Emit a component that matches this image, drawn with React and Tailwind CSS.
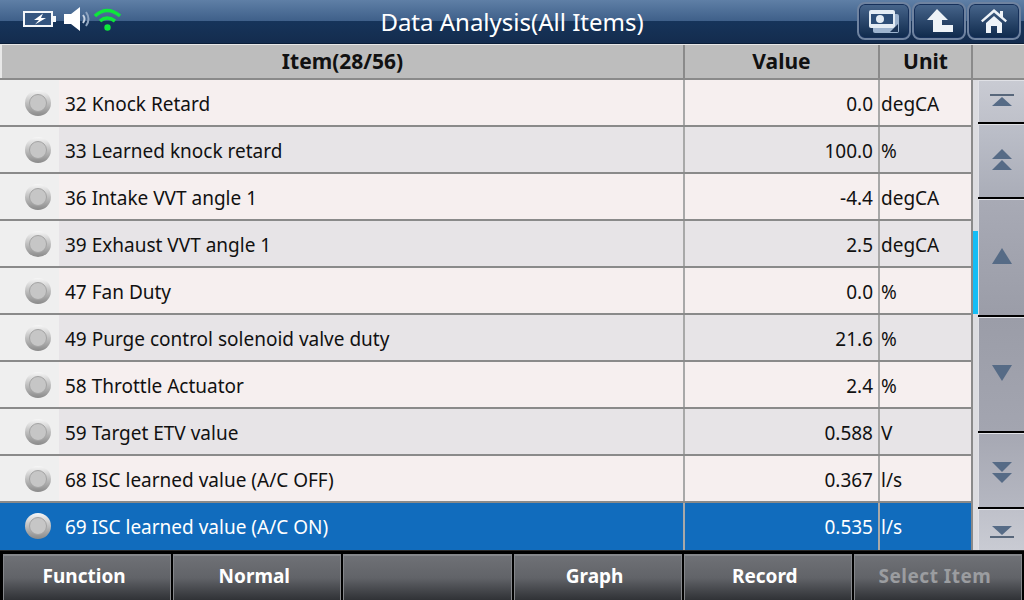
const rows = [
  ['32 Knock Retard', '0.0', 'degCA'],
  ['33 Learned knock retard', '100.0', '%'],
  ['36 Intake VVT angle 1', '-4.4', 'degCA'],
  ['39 Exhaust VVT angle 1', '2.5', 'degCA'],
  ['47 Fan Duty', '0.0', '%'],
  ['49 Purge control solenoid valve duty', '21.6', '%'],
  ['58 Throttle Actuator', '2.4', '%'],
  ['59 Target ETV value', '0.588', 'V'],
  ['68 ISC learned value (A/C OFF)', '0.367', 'l/s'],
  ['69 ISC learned value (A/C ON)', '0.535', 'l/s'],
]

const footer = ['Function', 'Normal', '', 'Graph', 'Record', 'Select Item']

function Radio() {
  return (
    <span className="w-[26px] h-[26px] rounded-full bg-gradient-to-b from-[#f7f7f7] to-[#8a8a8a] flex items-center justify-center">
      <span className="w-[18px] h-[18px] rounded-full bg-[#c6c6c6] border border-[#a4a4a4]" />
    </span>
  )
}

function Arrows({ kind }) {
  const c = '#566b86'
  return (
    <svg width="26" height="30" viewBox="0 0 26 30">
      {kind === 'first' && <><path d="M1 8h24" stroke="#33475f" strokeWidth="1.5" /><path d="M13 10l10 9H3z" fill={c} /></>}
      {kind === 'pageUp' && <><path d="M13 3l10 10H3z" fill={c} /><path d="M13 14l10 10H3z" fill={c} /></>}
      {kind === 'up' && <path d="M13 5l10 16H3z" fill={c} />}
      {kind === 'down' && <path d="M13 21L3 5h20z" fill={c} />}
      {kind === 'pageDown' && <><path d="M13 16L3 6h20z" fill={c} /><path d="M13 27L3 17h20z" fill={c} /></>}
      {kind === 'last' && <><path d="M13 20L3 11h20z" fill={c} /><path d="M1 22h24" stroke="#33475f" strokeWidth="1.5" /></>}
    </svg>
  )
}

const scrollButtons = [
  { kind: 'first', cls: 'h-[42px] from-[#c9cbd3] to-[#bfc1ca]' },
  { kind: 'pageUp', cls: 'h-[73px] from-[#bcbfc9] to-[#aaadb8]' },
  { kind: 'up', cls: 'h-[116px] from-[#a8aab5] to-[#9b9da8]' },
  { kind: 'down', cls: 'h-[114px] from-[#9b9da8] to-[#a3a5b0]' },
  { kind: 'pageDown', cls: 'h-[74px] from-[#a6a8b3] to-[#b5b7c1]' },
  { kind: 'last', cls: 'h-[41px] from-[#bfc1ca] to-[#c9cbd3]' },
]

function TopButton({ children }) {
  return (
    <div className="w-[54px] h-[38px] rounded-lg border-2 border-[#6f83a0] bg-gradient-to-b from-[#48668c] to-[#0f2a4c] flex items-center justify-center shadow-[inset_0_0_0_1px_#16305a]">
      {children}
    </div>
  )
}

export default function App() {
  return (
    <div className="w-[1024px] h-[600px] overflow-hidden flex flex-col bg-[#d5d5d8] font-['Noto_Sans',sans-serif]">
      {/* top bar */}
      <div className="relative h-[44px] shrink-0 flex items-center justify-between border-b border-[#0b1e38] bg-[linear-gradient(#5f7fa6_0%,#3f608a_48%,#16345a_50%,#142c4e_100%)]">
        <div className="flex items-center pl-[23px] gap-[7px] -mt-[6px]">
          <svg width="34" height="18" viewBox="0 0 34 18">
            <rect x="0" y="1" width="30" height="16" fill="#f4f7fa" />
            <rect x="2" y="3" width="26" height="12" fill="#34557f" />
            <rect x="30" y="6" width="3" height="6" fill="#f4f7fa" />
            <path d="M20 3.5l-9 6.5h5l-4 4.5 11-6.5h-5z" fill="#fff" />
          </svg>
          <svg width="28" height="24" viewBox="0 0 28 24" className="-ml-[1px]">
            <path d="M1 7h7l9-7v24l-9-7H1z" fill="#fff" />
            <path d="M20 8q3 4 0 8" stroke="#c7d3e2" strokeWidth="2" fill="none" />
            <path d="M23 5q5 7 0 14" stroke="#8ea4bf" strokeWidth="2" fill="none" />
          </svg>
          <svg width="27" height="24" viewBox="0 0 27 24" className="-ml-[4px]">
            <path d="M1 9q12-11 25 0" stroke="#0de83a" strokeWidth="3.5" fill="none" />
            <path d="M6 14q7-6 15 0" stroke="#0de83a" strokeWidth="3.5" fill="none" />
            <circle cx="13.5" cy="20.5" r="3.2" fill="#0de83a" />
          </svg>
        </div>
        <div className="absolute left-0 right-0 top-[5px] text-center text-[24px] leading-[34px] text-white">Data Analysis(All Items)</div>
        <div className="relative flex gap-[1px] pr-[3px] -mt-[1px]">
          <TopButton>
            <svg width="32" height="26" viewBox="0 0 32 26">
              <rect x="5" y="6" width="26" height="19" rx="2" fill="#9db4cf" />
              <rect x="1" y="2" width="26" height="18" rx="2" fill="#e4edf5" />
              <rect x="3" y="6" width="22" height="10" fill="#2e4f78" />
              <circle cx="12" cy="11" r="4" fill="#e4edf5" />
              <path d="M22 24l8-8v8z" fill="#1c3557" />
            </svg>
          </TopButton>
          <TopButton>
            <svg width="28" height="26" viewBox="0 0 28 26">
              <path d="M12 1L2 12h6v12h20v-7H17v-5h6z" fill="#eef3f8" />
            </svg>
          </TopButton>
          <TopButton>
            <svg width="26" height="26" viewBox="0 0 26 26">
              <path d="M13 1L0 12.5l1.5 1.8L13 4.5l11.5 9.8 1.5-1.8-4-3.5V3h-3v3z" fill="#eef3f8" />
              <path d="M5 15l8-7 8 7v10h-5v-7h-6v7H5z" fill="#eef3f8" />
            </svg>
          </TopButton>
        </div>
      </div>

      {/* header */}
      <div className="h-[36px] shrink-0 flex bg-[#bdbdbd] border-t border-[#e8e8e8] border-b-2 border-b-[#8a8a8a] text-[21px] leading-[33px] font-bold text-[#111]">
        <div className="w-[683px] text-center border-l-2 border-[#e8e8e8]">Item(28/56)</div>
        <div className="w-[195px] text-center border-l-2 border-[#8a8a8a]">Value</div>
        <div className="w-[93px] text-center border-l-2 border-[#8a8a8a]">Unit</div>
        <div className="flex-1 border-l-2 border-[#8a8a8a]" />
      </div>

      <div className="flex flex-1 min-h-0">
        {/* table rows */}
        <div className="w-[971px] flex flex-col">
          {rows.map((r, i) => {
            const selected = i === rows.length - 1
            const bg = selected ? 'bg-[#116cbd] text-white' : i % 2 ? 'bg-[#e7e4e7] text-[#111]' : 'bg-[#f6efef] text-[#111]'
            return (
              <div key={r[0]} className={`h-[47px] shrink-0 flex text-[19px] leading-[48px] border-b-2 last:border-b-0 border-[#8a8a8a] ${bg}`}>
                <div className="w-[683px] flex">
                  <div className={`w-[59px] h-[45px] flex items-center pl-[25px] ${selected ? '' : 'bg-[#efefef]'}`}>
                    <Radio />
                  </div>
                  <span className="pl-[6px]">{r[0]}</span>
                </div>
                <div className="w-[195px] text-right pr-[5px] border-l-2 border-[#a8a8a8]">{r[1]}</div>
                <div className="flex-1 pl-[1px] border-l-2 border-[#a8a8a8]">{r[2]}</div>
              </div>
            )
          })}
        </div>

        {/* scrollbar */}
        <div className="flex-1 flex border-l-2 border-[#8a8a8a]">
          <div className="relative w-[5px] bg-[#dcdce0]">
            <div className="absolute left-0 right-0 top-[151px] h-[83px] bg-[#14bdf5]" />
          </div>
          <div className="flex-1 flex flex-col gap-[2px] bg-black">
            {scrollButtons.map((b) => (
              <div key={b.kind} className={`shrink-0 flex items-center justify-center bg-gradient-to-b border-l border-t border-[#e0e1e6] ${b.cls}`}>
                <Arrows kind={b.kind} />
              </div>
            ))}
          </div>
        </div>
      </div>

      {/* bottom bar */}
      <div className="h-[50px] shrink-0 flex gap-[2px] pt-[3px] pl-[3px] pr-[2px] bg-black border-t border-[#2a2a2a]">
        {footer.map((f, i) => (
          <div key={i} className={`flex-1 text-center text-[19px] leading-[41px] pr-[6px] font-bold border-t-2 border-l border-r border-[#85878b] bg-gradient-to-b from-[#6f7176] via-[#616368] to-[#303236] ${f === 'Select Item' ? 'text-[#9b9da0] tracking-[0.5px]' : 'text-white'}`}>
            {f}
          </div>
        ))}
      </div>
    </div>
  )
}
